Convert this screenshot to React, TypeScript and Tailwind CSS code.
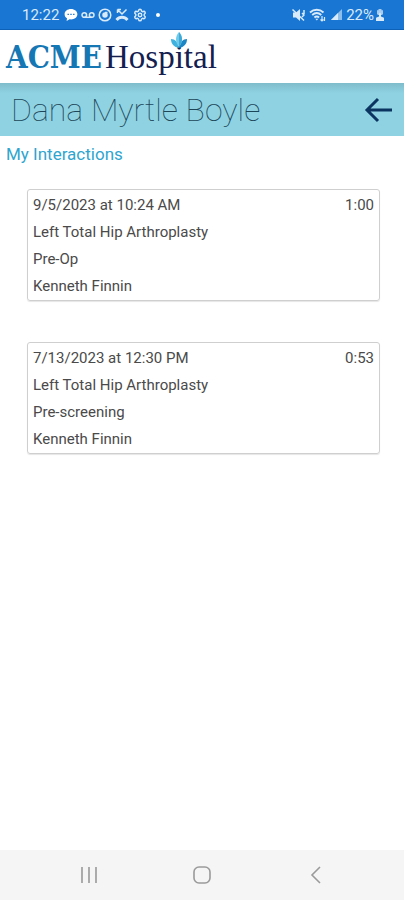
import { Settings } from "lucide-react";

type Interaction = {
  date: string;
  duration: string;
  procedure: string;
  stage: string;
  provider: string;
};

const interactions: Interaction[] = [
  {
    date: "9/5/2023 at 10:24 AM",
    duration: "1:00",
    procedure: "Left Total Hip Arthroplasty",
    stage: "Pre-Op",
    provider: "Kenneth Finnin",
  },
  {
    date: "7/13/2023 at 12:30 PM",
    duration: "0:53",
    procedure: "Left Total Hip Arthroplasty",
    stage: "Pre-screening",
    provider: "Kenneth Finnin",
  },
];

function StatusBar() {
  return (
    <div className="flex h-[30px] items-center justify-between border-b border-[#0d62b8] bg-[#1976d2] pr-5 pl-[22px] text-[#d9ebfa]">
      <div className="flex items-center gap-[3px]">
        <span className="mr-0.5 text-[15px] leading-5">12:22</span>
        {/* message */}
        <svg viewBox="0 0 14 14" className="size-3.5">
          <path d="M7 1C3.4 1 .6 3.2.6 6.2c0 1.8.9 3.2 2.4 4.1L2.600 13l3-1.700c.5.1.9.1 1.400.1 3.600 0 6.400-2.300 6.400-5.200S10.600 1 7 1z" fill="#fff" />
          <path d="M3.5 6.3h1.400M6.300 6.300h1.400M9.100 6.300h1.400" stroke="#1976d2" strokeWidth="1.3" />
        </svg>
        {/* voicemail */}
        <svg viewBox="0 0 14 14" className="size-3.5" fill="none" stroke="currentColor" strokeWidth="1.5">
          <circle cx="3.3" cy="7" r="2.3" />
          <circle cx="10.7" cy="7" r="2.3" />
          <path d="M3.3 9.3h7.4" />
        </svg>
        {/* recorder */}
        <svg viewBox="0 0 14 14" className="size-3.5" fill="none" stroke="currentColor" strokeWidth="1.5">
          <circle cx="7" cy="7" r="5.8" />
          <circle cx="7" cy="7" r="2" fill="currentColor" />
          <path d="M7 4.5h2.5" />
        </svg>
        {/* missed call */}
        <svg viewBox="0 0 14 14" className="size-3.5" fill="none" stroke="currentColor">
          <path d="M2.5 1.500V5M2.500 1.500H6M2.500 1.500L7 6l4.500-4.500" strokeWidth="1.5" />
          <path d="M1.5 12c3-3.700 8-3.700 11 0" strokeWidth="2.8" />
        </svg>
        <Settings className="ml-px size-3.5" strokeWidth={2.5} />
        <span className="ml-1.5 size-1 rounded-full bg-white" />
      </div>
      <div className="flex items-center gap-1">
        {/* muted */}
        <svg viewBox="0 0 14 14" className="size-3.5">
          <path d="M2 4.500h3L9 1v12L5 9.500H2z" fill="currentColor" />
          <path d="M1.500 1.500l11.500 11M11 5l2 2-2 2M13 2v4" stroke="currentColor" strokeWidth="1.5" fill="none" />
        </svg>
        {/* wifi */}
        <svg viewBox="0 0 17 14" className="h-3.5 w-[17px]" fill="none" stroke="currentColor" strokeWidth="1.9">
          <path d="M1 4.500c4-3.600 9.500-3.600 13.500 0M3.200 7c2.800-2.400 6.300-2.400 9.100 0M5.400 9.400c1.500-1.200 3.200-1.200 4.700 0" />
          <path d="M6.300 10.800l1.500 1.700 1.500-1.700z" fill="currentColor" stroke="none" />
          <path d="M13 8v5M11.500 11.500L13 13l1.500-1.500M15.500 13V9" strokeWidth="1.2" />
        </svg>
        {/* signal */}
        <svg viewBox="0 0 12 14" className="h-3.5 w-3">
          <path d="M12 1v11H1z" fill="#8fbdea" />
          <path d="M8 5v7H1z" fill="currentColor" />
        </svg>
        <span className="text-[15px] leading-5">22%</span>
        <svg viewBox="0 0 8 12" className="-ml-0.5 h-3 w-2" fill="currentColor">
          <path d="M2.5 0h3v1.200H7v4.300H1V1.200h1.500z" opacity=".75" />
          <path d="M4 3.500l2 2.500H5v1.500l3 1.300V12H0V8.800l3-1.300V6H2z" />
        </svg>
      </div>
    </div>
  );
}

function Logo() {
  return (
    <div className="relative flex items-baseline gap-[3px] whitespace-nowrap">
      <span className="font-['DejaVu_Serif_Condensed','DejaVu_Serif',serif] text-[31px] leading-9 font-bold text-[#1677b5]">
        ACME
      </span>
      <span className="font-['Liberation_Serif',serif] text-[33px] leading-9 text-[#14204f]">Hospital</span>
      {/* leaf mark over the "i" */}
      <svg viewBox="0 0 18 18" className="absolute -top-2 right-[29px] size-[18px]">
        <path d="M1 8c4 0 7 3 8 9C4 16 1 13 1 8z" fill="#3fb2df" />
        <path d="M17 8c-4 0-7 3-8 9 5-1 8-4 8-9z" fill="#1c86c4" />
        <path d="M9 1c4 4.500 4 10 0 15C5 11 5 5.500 9 1z" fill="#6fcbea" />
        <path d="M9 1c4 4.500 4 10 0 15z" fill="#41a9d8" />
      </svg>
    </div>
  );
}

function InteractionCard({ item }: { item: Interaction }) {
  return (
    <li className="rounded-[3px] border border-[#cfcfcf] px-[5px] pt-0.5 text-[15px] leading-[27px] text-[#4a4a4a] shadow-[0_1px_1px_#0000001a]">
      <div className="flex justify-between">
        <span>{item.date}</span>
        <span>{item.duration}</span>
      </div>
      <p>{item.procedure}</p>
      <p>{item.stage}</p>
      <p>{item.provider}</p>
    </li>
  );
}

export default function App() {
  return (
    <div className="flex min-h-screen flex-col bg-white font-['Roboto',sans-serif]">
      <StatusBar />
      <header className="flex h-[53px] items-center px-1.5">
        <Logo />
      </header>
      <div className="flex h-[53px] items-center justify-between bg-linear-to-b from-[#7fbccb] to-[#8fd3e3] to-20% pr-2.5 pl-[11px]">
        <h1 className="text-[32px] leading-10 font-thin text-[#1d4658]">Dana Myrtle Boyle</h1>
        <button type="button" aria-label="Back" className="text-[#0b3560]">
          <svg viewBox="0 0 30 26" className="h-[26px] w-[30px]" fill="none" stroke="currentColor" strokeWidth="3">
            <path d="M28 13H3M14 2L3 13l11 11" />
          </svg>
        </button>
      </div>
      <main className="flex-1">
        <h2 className="px-1.5 pt-1.5 text-[17px] leading-6 text-[#2fa5cf]">My Interactions</h2>
        <ul className="mt-[23px] flex flex-col gap-[41px] pr-6 pl-[27px]">
          {interactions.map((item) => (
            <InteractionCard key={item.date} item={item} />
          ))}
        </ul>
      </main>
      <nav className="flex h-[50px] items-center justify-between bg-[#f5f5f5] px-[79px] text-[#9a9a9a]" aria-label="System">
        <button type="button" aria-label="Recent apps">
          <svg viewBox="0 0 20 20" className="size-5" fill="none" stroke="currentColor" strokeWidth="1.6">
            <path d="M3 2v16M10 2v16M17 2v16" />
          </svg>
        </button>
        <button type="button" aria-label="Home">
          <svg viewBox="0 0 20 20" className="size-5" fill="none" stroke="currentColor" strokeWidth="1.6">
            <rect x="2" y="2" width="16" height="16" rx="5" />
          </svg>
        </button>
        <button type="button" aria-label="Back to previous app">
          <svg viewBox="0 0 20 20" className="size-5" fill="none" stroke="currentColor" strokeWidth="1.6">
            <path d="M15 2l-8 8 8 8" />
          </svg>
        </button>
      </nav>
    </div>
  );
}
